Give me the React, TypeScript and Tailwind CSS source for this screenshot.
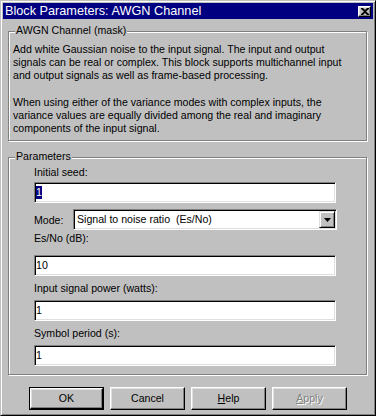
const sunken =
  "border border-t-[#808080] border-l-[#808080] border-b-white border-r-white shadow-[inset_1px_1px_#000,inset_-1px_-1px_#dfdfdf]";
const raised =
  "border border-t-white border-l-white border-b-black border-r-black shadow-[inset_-1px_-1px_#808080,inset_1px_1px_#dfdfdf]";
const etched = "border border-[#808080] shadow-[inset_1px_1px_#fff,1px_1px_#fff]";

function Field({ children }: { children: React.ReactNode }) {
  return (
    <div className={`${sunken} bg-white w-[302px] h-[21px] pl-[1px] flex items-center leading-[13px]`}>
      {children}
    </div>
  );
}

function Button({ children, def, disabled }: { children: React.ReactNode; def?: boolean; disabled?: boolean }) {
  const face = (
    <div
      className={`${raised} h-full w-full flex items-center justify-center ${
        disabled ? "text-[#808080] [text-shadow:1px_1px_0_#fff]" : ""
      }`}
    >
      {children}
    </div>
  );
  if (def) return <div className="w-[75px] h-[23px] border border-black">{face}</div>;
  return <div className="w-[75px] h-[23px]">{face}</div>;
}

export default function App() {
  return (
    <div className="w-[376px] h-[416px] bg-[#c0c0c0] border border-t-[#c0c0c0] border-l-[#c0c0c0] border-r-black border-b-black shadow-[inset_1px_1px_#fff,inset_-1px_-1px_#808080] p-[2px] flex flex-col text-[10.6px] text-black font-['Liberation_Sans',Arial,sans-serif]">
      <div className="h-[16px] bg-[#000080] flex items-center justify-between pl-[2px] pr-[2px]">
        <span className="text-white text-[12.7px] leading-[16px]">Block Parameters: AWGN Channel</span>
        <div className={`${raised} bg-[#c0c0c0] w-[13px] h-[11px] flex items-center justify-center`}>
          <svg width="8" height="7" viewBox="0 0 8 7">
            <path d="M0 0h2l2 2 2-2h2v1L5 3.5 8 6v1H6L4 5 2 7H0V6l3-2.5L0 1z" fill="#000" />
          </svg>
        </div>
      </div>

      <div className="px-[5px] flex flex-col">
        <div className={`${etched} relative mt-[12px] w-[359px] h-[110px]`}>
          <span className="absolute left-[6px] top-[-8px] px-[1px] bg-[#c0c0c0] leading-[13px]">
            AWGN Channel (mask)
          </span>
          <p className="pl-[4px] pt-[11px] leading-[13.2px]">
            Add white Gaussian noise to the input signal. The input and output
            <br />
            signals can be real or complex. This block supports multichannel input
            <br />
            and output signals as well as frame-based processing.
            <br />
            <br />
            When using either of the variance modes with complex inputs, the
            <br />
            variance values are equally divided among the real and imaginary
            <br />
            components of the input signal.
          </p>
        </div>

        <div className={`${etched} relative mt-[16px] w-[359px] h-[218px] pl-[25px] pt-[8px] flex flex-col`}>
          <span className="absolute left-[6px] top-[-8px] px-[1px] bg-[#c0c0c0] leading-[13px]">Parameters</span>
          <div className="leading-[13px]">Initial seed:</div>
          <div className="mt-[3px]">
            <Field>
              <span className="bg-[#000080] text-white">1</span>
            </Field>
          </div>
          <div className="mt-[6px] h-[21px] flex items-center">
            <span className="w-[39px] leading-[13px] pt-[2px]">Mode:</span>
            <div className={`${sunken} bg-white w-[264px] h-[21px] p-[1px] flex items-center`}>
              <span className="flex-1 pl-[2px] leading-[13px] whitespace-pre">Signal to noise ratio  (Es/No)</span>
              <div className="w-[16px] h-[17px] border border-t-[#dfdfdf] border-l-[#dfdfdf] border-b-black border-r-black shadow-[inset_1px_1px_#fff,inset_-1px_-1px_#808080] bg-[#c0c0c0] flex items-center justify-center">
                <svg width="7" height="4" viewBox="0 0 7 4">
                  <path d="M0 0h7L3.5 4z" fill="#000" />
                </svg>
              </div>
            </div>
          </div>
          <div className="mt-[2px] leading-[13px]">Es/No (dB):</div>
          <div className="mt-[10px]">
            <Field>10</Field>
          </div>
          <div className="mt-[6px] leading-[13px]">Input signal power (watts):</div>
          <div className="mt-[5px]">
            <Field>1</Field>
          </div>
          <div className="mt-[6px] leading-[13px]">Symbol period (s):</div>
          <div className="mt-[5px]">
            <Field>1</Field>
          </div>
        </div>

        <div className="mt-[12px] pl-[21px] flex gap-[6px]">
          <Button def>OK</Button>
          <Button>Cancel</Button>
          <Button>
            <span>
              <u className="underline-offset-1">H</u>elp
            </span>
          </Button>
          <Button disabled>
            <span>
              <u className="underline-offset-1">A</u>pply
            </span>
          </Button>
        </div>
      </div>
    </div>
  );
}
